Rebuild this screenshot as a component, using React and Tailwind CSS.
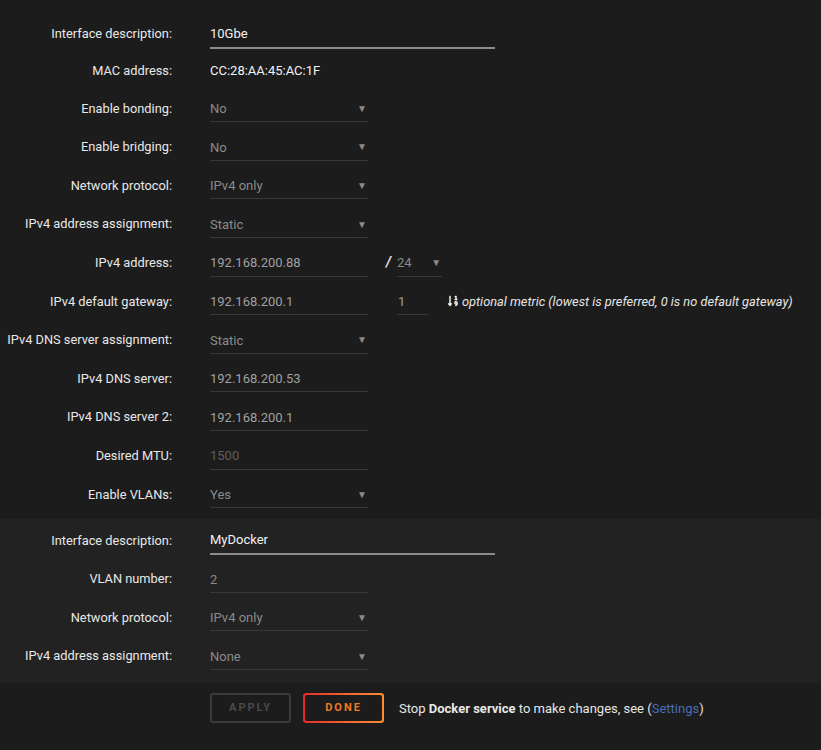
import React from "react";
import { FaSortNumericDown } from "react-icons/fa";

const font = { fontFamily: "Roboto, 'Noto Sans', sans-serif" };

function Arrow() {
  return <span className="text-[10px] leading-none text-[#8a8a8a]">▼</span>;
}

function Row({ label, children, h = "h-[38.6px]" }) {
  return (
    <div className={`flex ${h} items-center`}>
      <div className="w-[172px] shrink-0 text-right text-[12.8px] text-[#e8e8e8]">{label}</div>
      <div className="ml-[38px] flex items-center">{children}</div>
    </div>
  );
}

function Select({ value, w = "w-[158px]" }) {
  return (
    <div className={`flex h-[26px] ${w} translate-y-[1px] items-center justify-between border-b border-[#383838] pr-[1px] text-[13px] text-[#8a8a8a]`}>
      <span>{value}</span>
      <Arrow />
    </div>
  );
}

function Input({ value, color = "text-[#a0a0a0]", w = "w-[158px]" }) {
  return (
    <div className={`flex h-[26px] ${w} translate-y-[1px] items-center border-b border-[#383838] text-[13px] ${color}`}>
      <span>{value}</span>
    </div>
  );
}

function Desc({ value }) {
  return (
    <div className="flex h-[27px] w-[285px] translate-y-[1px] items-center border-b-2 border-[#8c8c8c] text-[13px] text-[#f2f2f2]">
      <span>{value}</span>
    </div>
  );
}

export default function App() {
  return (
    <div className="min-h-[750px] w-[821px] bg-[#1c1c1c]" style={font}>
      <div className="pt-[15px] pb-[5.4px]">
        <Row label="Interface description:" h="h-[38px]"><Desc value="10Gbe" /></Row>
        <Row label="MAC address:" h="h-[36px]"><span className="text-[13px] text-[#f2f2f2]">CC:28:AA:45:AC:1F</span></Row>
        <Row label="Enable bonding:"><Select value="No" /></Row>
        <Row label="Enable bridging:"><Select value="No" /></Row>
        <Row label="Network protocol:"><Select value="IPv4 only" /></Row>
        <Row label="IPv4 address assignment:"><Select value="Static" /></Row>
        <Row label="IPv4 address:">
          <Input value="192.168.200.88" />
          <span className="ml-[18px] mr-[6px] text-[14px] font-bold italic text-[#e6e6e6]">/</span>
          <Select value="24" w="w-[45px]" />
        </Row>
        <Row label="IPv4 default gateway:">
          <Input value="192.168.200.1" />
          <div className="ml-[29px]">
            <Input value={<span className="pl-[1px]">1</span>} w="w-[31px]" />
          </div>
          <FaSortNumericDown className="ml-[19px] text-[12px] text-[#f0f0f0]" />
          <span className="ml-[3px] text-[12.8px] italic text-[#e6e6e6]">optional metric (lowest is preferred, 0 is no default gateway)</span>
        </Row>
        <Row label="IPv4 DNS server assignment:"><Select value="Static" /></Row>
        <Row label="IPv4 DNS server:"><Input value="192.168.200.53" /></Row>
        <Row label="IPv4 DNS server 2:"><Input value="192.168.200.1" /></Row>
        <Row label="Desired MTU:"><Input value="1500" color="text-[#5e5e5e]" /></Row>
        <Row label="Enable VLANs:"><Select value="Yes" /></Row>
      </div>
      <div className="bg-[#222222] pt-[2px] pb-[8px]">
        <Row label="Interface description:"><Desc value="MyDocker" /></Row>
        <Row label="VLAN number:"><Input value="2" color="text-[#8a8a8a]" /></Row>
        <Row label="Network protocol:"><Select value="IPv4 only" /></Row>
        <Row label="IPv4 address assignment:"><Select value="None" /></Row>
      </div>
      <div className="flex items-center pl-[210px] pt-[10px]">
        <div className="flex h-[30px] w-[81px] items-center justify-center rounded-[3px] border-2 border-[#3a3a3a] text-[11px] font-bold tracking-[2px] text-[#4a4a4a]">
          APPLY
        </div>
        <div className="ml-[12px] rounded-[3px] bg-gradient-to-r from-[#e22828] to-[#ff8d30] p-[2px]">
          <div className="flex h-[26px] w-[77px] items-center justify-center rounded-[2px] bg-[#1c1c1c]">
            <span className="text-[11px] font-bold tracking-[2px] text-[#ee7a22]">DONE</span>
          </div>
        </div>
        <div className="ml-[15px] text-[13px] text-[#e6e6e6]">
          Stop <span className="font-bold">Docker service</span> to make changes, see (<span className="text-[#4a6db5]">Settings</span>)
        </div>
      </div>
    </div>
  );
}
